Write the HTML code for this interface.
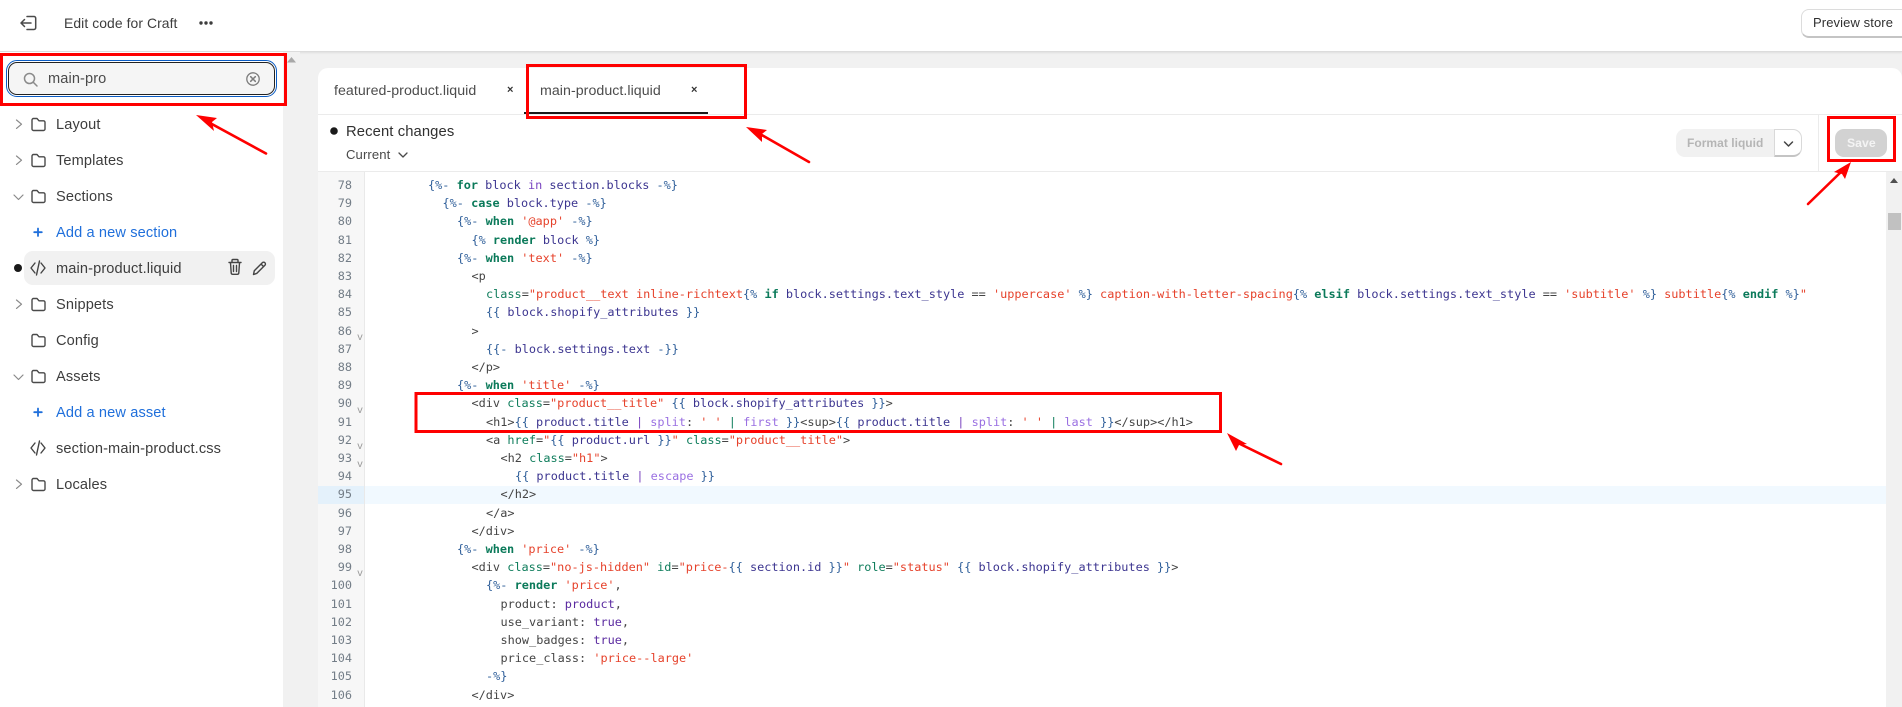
<!DOCTYPE html>
<html lang="en"><head><meta charset="utf-8"><title>Edit code for Craft</title>
<style>
html,body{margin:0;padding:0;width:1902px;height:707px;overflow:hidden;background:#f1f1f1;font-family:"Liberation Sans",sans-serif;color:#303030}
#root{position:relative;width:1902px;height:707px;overflow:hidden}
.a{position:absolute}
.abs{position:absolute;white-space:nowrap}
#top{left:0;top:0;width:1902px;height:51px;background:#fff;border-bottom:1px solid #dcdcdc;box-shadow:0 1px 2px rgba(0,0,0,.08)}
#side{left:0;top:52px;width:283px;height:655px;background:#fff}
#track{left:283px;top:52px;width:17px;height:655px;background:#f1f1f1}
.it{position:absolute;left:56px;font-size:14.6px;line-height:20px;letter-spacing:.12px;color:#3d3d3d;white-space:nowrap}
.bl{color:#1f6fdb}
svg{position:absolute;overflow:visible}
#card{left:318px;top:68px;width:1584px;height:639px;background:#fff;border-top-left-radius:10px;border-top-right-radius:10px}
pre,#code{margin:0;font-family:"DejaVu Sans Mono",monospace;font-size:11.87px;line-height:18.21px;color:#444}
pre{white-space:pre}
#code{height:531px;width:1516px;overflow:hidden}
#code div{height:18.21px;white-space:pre}
.i8{padding-left:58px}.i10{padding-left:72.5px}.i12{padding-left:87px}.i14{padding-left:101.5px}.i16{padding-left:116px}.i18{padding-left:130.5px}.i20{padding-left:145px}
.d{color:#2f5f9a}.k{color:#0b7a5a;font-weight:bold}.v{color:#3c3590}.s{color:#e6422b}.f{color:#9a70e2}.g{color:#0f7d5c}.u{color:#5a2aa0}.l{color:#7a45c0}
.fold{position:absolute;left:357px;font:10px "Liberation Mono",monospace;color:#999;line-height:10px}
</style></head><body><div id="root">

<div class="a" id="top"></div>
<svg style="left:19px;top:14px" width="20" height="18" viewBox="0 0 20 18" fill="none" stroke="#4a4a4a" stroke-width="1.5" stroke-linecap="round" stroke-linejoin="round"><path d="M8 2.5h7a1.7 1.7 0 0 1 1.7 1.7v9.6a1.7 1.7 0 0 1-1.7 1.7H8"/><path d="M12 9H2M5.5 5.5 2 9l3.5 3.500"/></svg>
<div class="abs" style="left:64px;top:13px;font-size:13.9px;line-height:20px;letter-spacing:.08px;color:#3d3d3d">Edit code for Craft</div>
<svg style="left:198px;top:20px" width="16" height="6"><circle cx="3" cy="3" r="1.7" fill="#3d3d3d"/><circle cx="8" cy="3" r="1.7" fill="#3d3d3d"/><circle cx="13" cy="3" r="1.7" fill="#3d3d3d"/></svg>
<div class="a" style="left:1801px;top:9px;width:110px;height:26px;border:1px solid #dcdcdc;border-bottom:2px solid #c4c4c4;border-radius:8px;background:#fff"></div>
<div class="abs" style="left:1813px;top:13px;font-size:13px;line-height:20px;letter-spacing:.1px;color:#303030">Preview store</div>

<div class="a" id="side"></div>
<div class="a" id="track"></div>
<svg style="left:287px;top:57px" width="9" height="6"><path d="M0 5.500L4.500 0 9 5.500z" fill="#a8a8a8"/></svg>

<!-- search -->
<div class="a" style="left:6px;top:60px;width:271px;height:37px;border:1.500px solid #0a5cc4;border-radius:11px;box-sizing:border-box;background:#fff"></div>
<div class="a" style="left:8px;top:62px;width:267px;height:33px;border:1px solid #222;border-radius:9px;box-sizing:border-box;background:#f5f5f5"></div>
<svg style="left:23px;top:72px" width="15" height="15" fill="none" stroke="#8a8a8a" stroke-width="1.500" stroke-linecap="round"><circle cx="6.500" cy="6.500" r="5"/><path d="M10.500 10.500 14 14"/></svg>
<div class="abs" style="left:48px;top:69px;font-size:14.600px;line-height:20px;letter-spacing:.1px;color:#4a4a4a">main-pro</div>
<svg style="left:246px;top:72px" width="14" height="14" fill="none" stroke="#7c7c7c" stroke-width="1.300" stroke-linecap="round"><circle cx="7" cy="7" r="6.200"/><path d="M4.700 4.700l4.600 4.600M9.300 4.700l-4.600 4.600" stroke-width="1.500"/></svg>

<!-- tree -->
<svg style="left:0;top:0" width="283" height="520" fill="none" stroke-linecap="round" stroke-linejoin="round">
<g stroke="#8a8a8a" stroke-width="1.200">
<path d="M16.500 120l5 4.200-5 4.200M16.500 156l5 4.200-5 4.200M16.500 300l5 4.200-5 4.200M16.500 480l5 4.200-5 4.200"/>
<path d="M14 195l4.500 4.500 4.500-4.500M14 375l4.500 4.500 4.500-4.500"/>
</g>
<g stroke="#4a4a4a" stroke-width="1.400">
<path d="M32 120a1.500 1.500 0 0 1 1.500-1.500h3.500l2 2.300h4.500a1.500 1.500 0 0 1 1.500 1.500v6.700a1.500 1.500 0 0 1-1.500 1.500h-10a1.500 1.500 0 0 1-1.500-1.500z"/>
<path d="M32 156a1.500 1.500 0 0 1 1.500-1.500h3.500l2 2.300h4.500a1.500 1.500 0 0 1 1.500 1.500v6.700a1.500 1.500 0 0 1-1.500 1.500h-10a1.500 1.500 0 0 1-1.500-1.500z"/>
<path d="M32 192a1.500 1.500 0 0 1 1.500-1.500h3.500l2 2.300h4.500a1.500 1.500 0 0 1 1.500 1.500v6.700a1.500 1.500 0 0 1-1.500 1.500h-10a1.500 1.500 0 0 1-1.500-1.500z"/>
<path d="M32 300a1.500 1.500 0 0 1 1.500-1.500h3.500l2 2.300h4.500a1.500 1.500 0 0 1 1.500 1.500v6.700a1.500 1.500 0 0 1-1.500 1.500h-10a1.500 1.500 0 0 1-1.500-1.500z"/>
<path d="M32 336a1.500 1.500 0 0 1 1.500-1.500h3.500l2 2.300h4.500a1.500 1.500 0 0 1 1.500 1.500v6.700a1.500 1.500 0 0 1-1.500 1.500h-10a1.500 1.500 0 0 1-1.500-1.500z"/>
<path d="M32 372a1.500 1.500 0 0 1 1.500-1.500h3.500l2 2.300h4.500a1.500 1.500 0 0 1 1.500 1.500v6.700a1.500 1.500 0 0 1-1.500 1.500h-10a1.500 1.500 0 0 1-1.500-1.500z"/>
<path d="M32 480a1.500 1.500 0 0 1 1.500-1.500h3.500l2 2.300h4.500a1.500 1.500 0 0 1 1.500 1.500v6.700a1.500 1.500 0 0 1-1.500 1.500h-10a1.500 1.500 0 0 1-1.500-1.500z"/>
</g>
</svg>
<div class="a" style="left:24px;top:251px;width:251px;height:34px;background:#f1f1f1;border-radius:9px"></div>
<svg style="left:0;top:0" width="283" height="520" fill="none" stroke-linecap="round" stroke-linejoin="round">
<circle cx="18" cy="268" r="4" fill="#1a1a1a"/>
<g stroke="#444" stroke-width="1.400">
<path d="M35 263l-4 5 4 5M41 263l4 5-4 5M39.500 261l-3 14"/>
<path d="M35 443l-4 5 4 5M41 443l4 5-4 5M39.500 441l-3 14"/>
<path d="M229 262.500h12M232 262v-1.500a1 1 0 0 1 1-1h4a1 1 0 0 1 1 1v1.500M230.500 263l.7 10a1.500 1.500 0 0 0 1.500 1.300h4.600a1.500 1.500 0 0 0 1.500-1.300l.7-10M233.500 265.500v6M236.500 265.500v6"/>
<path d="M253.500 274.500l.8-3.800 8-8a1.800 1.800 0 0 1 2.600 2.600l-8 8zM261 264l2.600 2.600"/>
</g>
<g stroke="#1f6fdb" stroke-width="1.800"><path d="M38 228.500v7.500M34.200 232.200h7.600M38 408.500v7.500M34.200 412.200h7.600"/></g>
</svg>
<div class="it" style="top:115px">Layout</div>
<div class="it" style="top:151px">Templates</div>
<div class="it" style="top:187px">Sections</div>
<div class="it bl" style="top:223px">Add a new section</div>
<div class="it" style="top:259px">main-product.liquid</div>
<div class="it" style="top:295px">Snippets</div>
<div class="it" style="top:331px">Config</div>
<div class="it" style="top:367px">Assets</div>
<div class="it bl" style="top:403px">Add a new asset</div>
<div class="it" style="top:439px">section-main-product.css</div>
<div class="it" style="top:475px">Locales</div>

<!-- card -->
<div class="a" id="card"></div>
<div class="a" style="left:318px;top:114px;width:1584px;height:1px;background:#ebebeb"></div>
<div class="a" style="left:318px;top:171px;width:1584px;height:1px;background:#ebebeb"></div>
<div class="a" style="left:1818px;top:114px;width:1px;height:57px;background:#ebebeb"></div>
<div class="abs" style="left:334px;top:81px;font-size:14.200px;line-height:20px;letter-spacing:.05px;color:#4d4d4d">featured-product.liquid</div>
<div class="abs" style="left:510px;top:84px;font:bold 11px/12px 'Liberation Sans',sans-serif;margin-left:-3px;color:#333">×</div>
<div class="abs" style="left:540px;top:81px;font-size:14.200px;line-height:20px;letter-spacing:.05px;color:#4d4d4d">main-product.liquid</div>
<div class="abs" style="left:694px;top:84px;font:bold 11px/12px 'Liberation Sans',sans-serif;margin-left:-3px;color:#333">×</div>
<div class="a" style="left:524px;top:112px;width:184px;height:2px;background:#1a1a1a"></div>
<svg style="left:330px;top:127px" width="8" height="8"><circle cx="4" cy="4" r="3.800" fill="#1a1a1a"/></svg>
<div class="abs" style="left:346px;top:122px;font-size:14.800px;line-height:20px;letter-spacing:.1px;color:#303030">Recent changes</div>
<div class="abs" style="left:346px;top:145px;font-size:13.100px;line-height:20px;letter-spacing:.1px;color:#4a4a4a">Current</div>
<svg style="left:398px;top:152px" width="10" height="6" fill="none" stroke="#4a4a4a" stroke-width="1.300" stroke-linecap="round" stroke-linejoin="round"><path d="M1 1l4 4 4-4"/></svg>

<!-- format & save -->
<div class="a" style="left:1676px;top:129px;width:98px;height:28px;background:#f1f1f1;border-radius:9px 0 0 9px"></div>
<div class="abs" style="left:1687px;top:133px;font-size:12px;line-height:20px;font-weight:bold;letter-spacing:.03px;color:#b5b5b5">Format liquid</div>
<div class="a" style="left:1774px;top:129px;width:28px;background:#fff;border:1px solid #d9d9d9;border-bottom:2px solid #c4c4c4;border-radius:0 9px 9px 0;box-sizing:border-box;height:28px"></div>
<svg style="left:1783px;top:141px" width="11" height="7" fill="none" stroke="#444" stroke-width="1.500" stroke-linecap="round" stroke-linejoin="round"><path d="M1.500 1l4 4 4-4"/></svg>
<div class="a" style="left:1835px;top:129px;width:52px;height:28px;background:#d2d2d2;border-radius:9px"></div>
<div class="abs" style="left:1847px;top:133px;font-size:12.200px;line-height:20px;font-weight:bold;color:#f4f4f4;letter-spacing:.05px">Save</div>

<!-- gutter -->
<div class="a" style="left:318px;top:172px;width:46px;height:535px;background:#f7f7f7;border-right:1px solid #e9e9e9"></div>
<div class="a" style="left:318px;top:486px;width:46px;height:18px;background:#e4f1fb"></div>
<div class="a" style="left:365px;top:486px;width:1521px;height:18px;background:#f1f9ff"></div>

<pre class="a" style="left:318px;top:176px;width:34px;text-align:right;color:#737d87">78
79
80
81
82
83
84
85
86
87
88
89
90
91
92
93
94
95
96
97
98
99
100
101
102
103
104
105
106</pre>
<div class="fold" style="top:334px">v</div>
<div class="fold" style="top:407px">v</div>
<div class="fold" style="top:443px">v</div>
<div class="fold" style="top:461px">v</div>
<div class="fold" style="top:570px">v</div>

<div class="a" id="code" style="left:370px;top:176px">
<div class="i8"><span class="d">{%-</span> <span class="k">for</span> <span class="v">block</span> <span class="l">in</span> <span class="v">section.blocks</span> <span class="d">-%}</span></div>
<div class="i10"><span class="d">{%-</span> <span class="k">case</span> <span class="v">block.type</span> <span class="d">-%}</span></div>
<div class="i12"><span class="d">{%-</span> <span class="k">when</span> <span class="s">'@app'</span> <span class="d">-%}</span></div>
<div class="i14"><span class="d">{%</span> <span class="k">render</span> <span class="v">block</span> <span class="d">%}</span></div>
<div class="i12"><span class="d">{%-</span> <span class="k">when</span> <span class="s">'text'</span> <span class="d">-%}</span></div>
<div class="i14">&lt;p</div>
<div class="i16"><span class="g">class</span>=<span class="s">"product__text inline-richtext</span><span class="d">{%</span> <span class="k">if</span> <span class="v">block.settings.text_style</span> == <span class="s">'uppercase'</span> <span class="d">%}</span><span class="s"> caption-with-letter-spacing</span><span class="d">{%</span> <span class="k">elsif</span> <span class="v">block.settings.text_style</span> == <span class="s">'subtitle'</span> <span class="d">%}</span><span class="s"> subtitle</span><span class="d">{%</span> <span class="k">endif</span> <span class="d">%}</span><span class="s">"</span></div>
<div class="i16"><span class="d">{{</span> <span class="v">block.shopify_attributes</span> <span class="d">}}</span></div>
<div class="i14">&gt;</div>
<div class="i16"><span class="d">{{-</span> <span class="v">block.settings.text</span> <span class="d">-}}</span></div>
<div class="i14">&lt;/p&gt;</div>
<div class="i12"><span class="d">{%-</span> <span class="k">when</span> <span class="s">'title'</span> <span class="d">-%}</span></div>
<div class="i14">&lt;div <span class="g">class</span>=<span class="s">"product__title"</span> <span class="d">{{</span> <span class="v">block.shopify_attributes</span> <span class="d">}}</span>&gt;</div>
<div class="i16">&lt;h1&gt;<span class="d">{{</span> <span class="v">product.title</span> <span class="l">|</span> <span class="f">split</span>: <span class="s">' '</span> <span class="g">|</span> <span class="f">first</span> <span class="d">}}</span>&lt;sup&gt;<span class="d">{{</span> <span class="v">product.title</span> <span class="l">|</span> <span class="f">split</span>: <span class="s">' '</span> <span class="g">|</span> <span class="f">last</span> <span class="d">}}</span>&lt;/sup&gt;&lt;/h1&gt;</div>
<div class="i16">&lt;a <span class="g">href</span>=<span class="s">"</span><span class="d">{{</span> <span class="v">product.url</span> <span class="d">}}</span><span class="s">"</span> <span class="g">class</span>=<span class="s">"product__title"</span>&gt;</div>
<div class="i18">&lt;h2 <span class="g">class</span>=<span class="s">"h1"</span>&gt;</div>
<div class="i20"><span class="d">{{</span> <span class="v">product.title</span> <span class="l">|</span> <span class="f">escape</span> <span class="d">}}</span></div>
<div class="i18">&lt;/h2&gt;</div>
<div class="i16">&lt;/a&gt;</div>
<div class="i14">&lt;/div&gt;</div>
<div class="i12"><span class="d">{%-</span> <span class="k">when</span> <span class="s">'price'</span> <span class="d">-%}</span></div>
<div class="i14">&lt;div <span class="g">class</span>=<span class="s">"no-js-hidden"</span> <span class="g">id</span>=<span class="s">"price-</span><span class="d">{{</span> <span class="v">section.id</span> <span class="d">}}</span><span class="s">"</span> <span class="g">role</span>=<span class="s">"status"</span> <span class="d">{{</span> <span class="v">block.shopify_attributes</span> <span class="d">}}</span>&gt;</div>
<div class="i16"><span class="d">{%-</span> <span class="k">render</span> <span class="s">'price'</span>,</div>
<div class="i18">product: <span class="u">product</span>,</div>
<div class="i18">use_variant: <span class="u">true</span>,</div>
<div class="i18">show_badges: <span class="u">true</span>,</div>
<div class="i18">price_class: <span class="s">'price--large'</span></div>
<div class="i16"><span class="d">-%}</span></div>
<div class="i14">&lt;/div&gt;</div>
</div>

<!-- right scrollbar -->
<div class="a" style="left:1886px;top:172px;width:16px;height:535px;background:#f1f1f1"></div>
<svg style="left:1890px;top:178px" width="8" height="5"><path d="M0 5L4 0l4 5z" fill="#505050"/></svg>
<div class="a" style="left:1888px;top:213px;width:13px;height:17px;background:#c1c1c1"></div>

<!-- annotations -->
<svg style="left:0;top:0" width="1902" height="707" fill="none">
<g stroke="#fe0000" stroke-width="3">
<rect x="1.500" y="54.500" width="284" height="50"/>
<rect x="527.500" y="65.500" width="218" height="52"/>
<rect x="1828.500" y="117.500" width="66" height="43"/>
<rect x="416" y="393.500" width="804.500" height="38"/>
</g>
<g stroke="#fe0000" stroke-width="2.600" stroke-linecap="round">
<path d="M266 153.500 210 123"/><path d="M809 162 760 134"/><path d="M1808 204 1842 171"/><path d="M1281 464 1238 443"/>
</g>
<g fill="#fe0000">
<path d="M196 115 217 118 212 122 214 131z"/>
<path d="M746 127 767 130 762 134 762 142z"/>
<path d="M1851 162 1845 179 1842 174 1834 172z"/>
<path d="M1227 433 1236 451 1239 445 1247 444z"/>
</g>
</svg>
</div></body></html>
